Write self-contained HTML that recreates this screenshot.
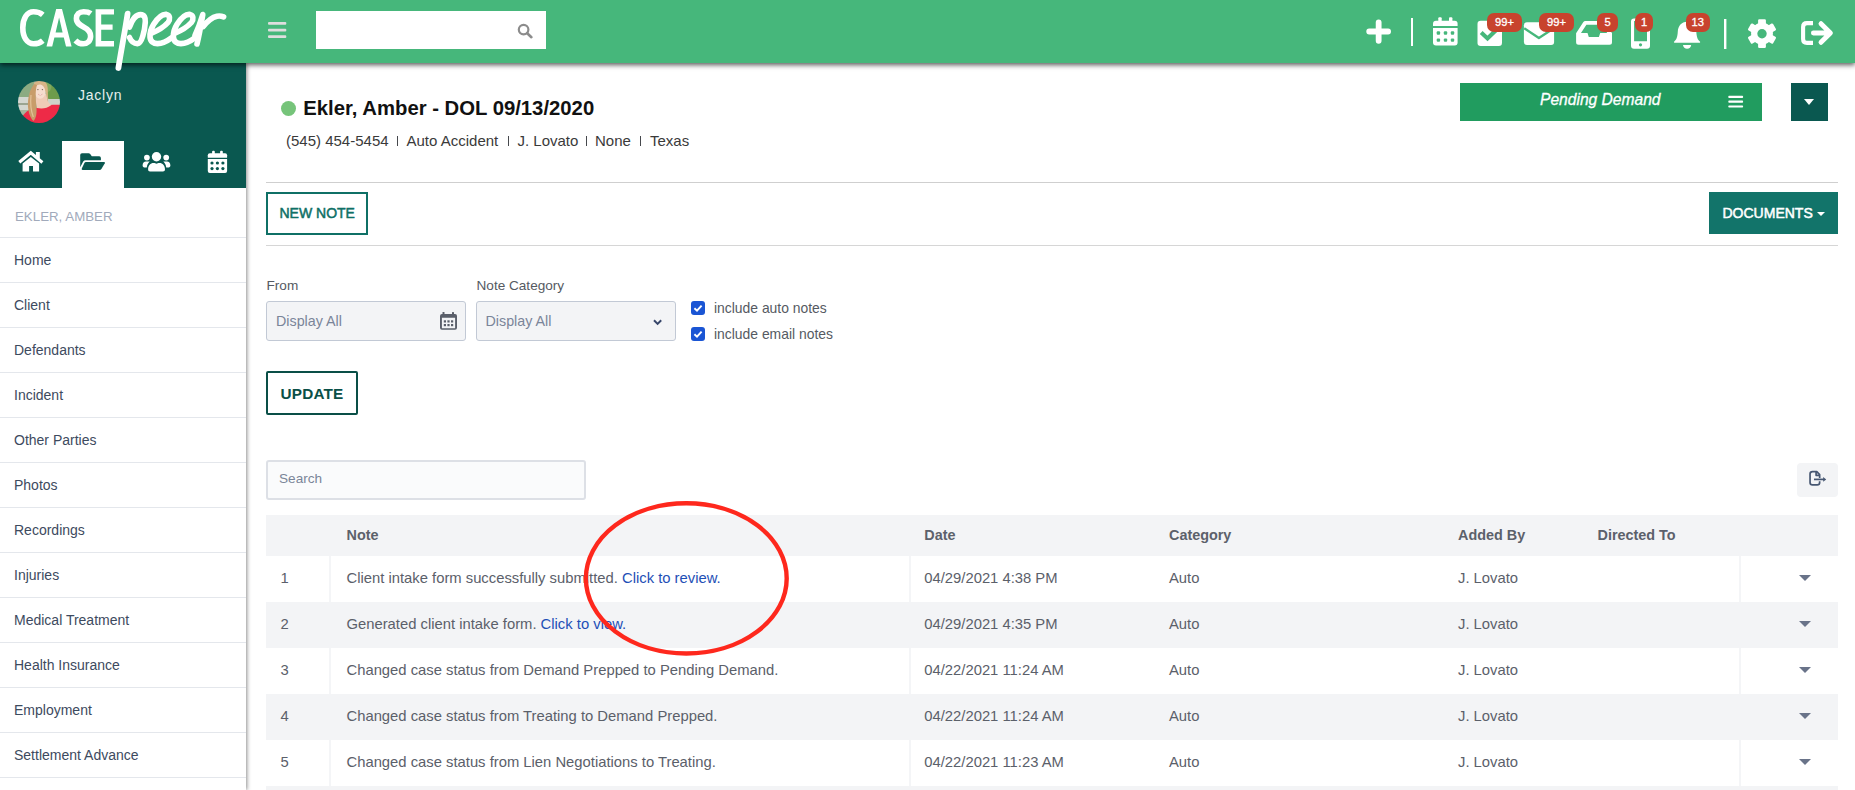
<!DOCTYPE html>
<html><head><meta charset="utf-8">
<style>
*{box-sizing:border-box;margin:0;padding:0}
html,body{width:1855px;height:790px;overflow:hidden;background:#fff;font-family:"Liberation Sans",sans-serif;position:relative}
.abs{position:absolute}
.t{position:absolute;white-space:nowrap;line-height:1}
#hdr{left:0;top:0;width:1855px;height:63px;background:#46b77b;z-index:5;box-shadow:0 2px 5px rgba(0,0,0,.65)}
#side{left:0;top:63px;width:246px;height:727px;background:#fff;z-index:4;box-shadow:1px 0 4px rgba(0,0,0,.45)}
.badge{position:absolute;top:13px;height:19px;border-radius:7px;background:#c8432d;color:#fff;font-size:11.2px;line-height:19px;text-align:center;-webkit-text-stroke:0.3px #fff}
.snav{position:absolute;left:0;width:246px;height:45px;border-top:1px solid #e4e7ec;color:#3d4a5e;font-size:14px}
.snav span{position:absolute;left:14px;top:15px;line-height:1}
</style></head>
<body>
<!-- HEADER -->
<div id="hdr" class="abs">
<svg class="abs" style="left:0;top:0;overflow:visible" width="1855" height="63" viewBox="0 0 1855 63">
  <!-- CASE -->
  <g fill="none" stroke="#fff" stroke-width="5.6">
    <path d="M42.8 14.8 C40 12.4 37 11.7 33.6 11.7 C27 11.7 22.8 18.5 22.8 27.75 C22.8 37.2 27 43.8 33.6 43.8 C37 43.8 40 43 42.8 40.6"/>
    <path d="M90.8 13.6 C88.6 12 86.2 11.7 83.6 11.7 C79.2 11.7 76.4 14.5 76.4 18.6 C76.4 23.2 80 25.2 84 27.2 C88.4 29.4 90.6 31.6 90.6 36.2 C90.6 41 87.4 43.8 83.2 43.8 C80.2 43.8 77.6 42.6 75.4 40.4"/>
  </g>
  <path fill="#fff" fill-rule="evenodd" d="M46.5 46.6 L56.2 9 L62 9 L71.6 46.6 L66 46.6 L63.8 37.6 L54.4 37.6 L52.2 46.6 Z M55.6 32.6 L62.6 32.6 L59.1 17.5 Z"/>
  <path fill="#fff" d="M95.6 9.3 L114 9.3 L114 14.6 L101.2 14.6 L101.2 24.6 L112.6 24.6 L112.6 29.8 L101.2 29.8 L101.2 41 L114 41 L114 46.4 L95.6 46.4 Z"/>
  <!-- peer -->
  <g fill="none" stroke="#fff" stroke-width="5.6" stroke-linecap="round" stroke-linejoin="round">
    <path d="M127.6 13.6 C125.2 30 121.2 50 118.4 68" stroke-width="5.8"/>
    <path d="M129.5 27 C132 20 136 14.6 140.5 14.6 C144.5 14.6 145.6 18 145.3 22 C144.8 30 142 43.5 137.5 43.6 C134 43.7 131 41 129.5 37.5"/>
    <path d="M151 33.5 C157 31 164 27 168 22.5 C170.5 19.5 170 15 166.5 14.4 C162 13.8 157 19 153.5 24.5 C151 28.5 149.8 33 150 37 C150.3 41.5 153.5 43.6 157.5 43.6 C163 43.6 168 40.5 172 37.5"/>
    <path d="M 174.4 33.5 C 180.4 31.0 187.4 27.0 191.4 22.5 C 193.9 19.5 193.4 15.0 189.9 14.4 C 185.4 13.8 180.4 19.0 176.9 24.5 C 174.4 28.5 173.2 33.0 173.4 37.0 C 173.7 41.5 176.9 43.6 180.9 43.6 C 186.4 43.6 191.4 40.5 195.4 37.5"/>
    <path d="M195 35.5 C197.5 30 200.5 22 202.8 14.5 C201 25 199 36 197 44"/>
    <path d="M203.2 26.5 C207.5 21 212.5 17.2 217 16.2 C219.5 15.7 221.5 16 223.6 16.9"/>
  </g>
  <!-- hamburger -->
  <g fill="#dedede"><rect x="268" y="22" width="18.3" height="2.8" rx="1"/><rect x="268" y="28.7" width="18.3" height="2.8" rx="1"/><rect x="268" y="35.2" width="18.3" height="2.8" rx="1"/></g>
  <!-- search -->
  <rect x="316" y="11" width="230" height="38" fill="#fff"/>
  <circle cx="523.6" cy="29.6" r="4.8" fill="none" stroke="#8c8c8c" stroke-width="2.2"/>
  <path d="M527.2 33.2 L531.4 37.2" stroke="#8c8c8c" stroke-width="2.6" stroke-linecap="round"/>
  <!-- plus -->
  <path d="M1369.2 31.5 H1388.1 M1378.65 22.3 V40.8" stroke="#fff" stroke-width="5.8" stroke-linecap="round"/>
  <rect x="1411" y="18" width="2" height="28" fill="#fff"/>
  <!-- calendar -->
  <g fill="#fff">
    <rect x="1438.3" y="17.3" width="3.4" height="6" rx="1"/><rect x="1449" y="17.3" width="3.4" height="6" rx="1"/>
    <path d="M1433 23.8 Q1433 20.8 1436 20.8 L1454.6 20.8 Q1457.6 20.8 1457.6 23.8 L1457.6 26.1 L1433 26.1 Z"/>
    <path d="M1433 28.1 L1457.6 28.1 L1457.6 42.4 Q1457.6 45.4 1454.6 45.4 L1436 45.4 Q1433 45.4 1433 42.4 Z"/>
  </g>
  <g fill="#46b77b"><rect x="1436.7" y="31.3" width="3.4" height="3.4" rx="1"/><rect x="1443.8" y="31.3" width="3.4" height="3.4" rx="1"/><rect x="1450.8" y="31.3" width="3.4" height="3.4" rx="1"/><rect x="1436.7" y="38.4" width="3.4" height="3.4" rx="1"/><rect x="1443.8" y="38.4" width="3.4" height="3.4" rx="1"/><rect x="1450.8" y="38.4" width="3.4" height="3.4" rx="1"/></g>
  <!-- check square -->
  <rect x="1477.5" y="20.8" width="24.5" height="25.1" rx="3.2" fill="#fff"/>
  <path d="M1481.2 32.6 L1487.5 38.5 L1497 29.2" fill="none" stroke="#46b77b" stroke-width="4.1"/>
  <!-- envelope -->
  <rect x="1523.9" y="22.2" width="30.2" height="22.8" rx="3" fill="#fff"/>
  <path d="M1524.2 28.2 L1538.9 38 L1553.8 28.2" fill="none" stroke="#46b77b" stroke-width="2.3" stroke-linejoin="round"/>
  <!-- inbox -->
  <path fill="#fff" fill-rule="evenodd" d="M1576.1 33.2 L1583.2 22.2 Q1584 20.9 1585.5 20.9 L1603 20.9 Q1604.5 20.9 1605.3 22.2 L1612 33.2 L1612 42.2 Q1612 44.7 1609.5 44.7 L1578.6 44.7 Q1576.1 44.7 1576.1 42.2 Z M1581 32.9 L1586.4 24.8 L1602 24.8 L1607.2 32.9 L1600.2 32.9 L1598.9 36.9 L1588.8 36.9 L1587.5 32.9 Z"/>
  <!-- phone -->
  <path fill="#fff" fill-rule="evenodd" d="M1634 18.6 L1647 18.6 Q1650 18.6 1650 21.6 L1650 45.8 Q1650 48.8 1647 48.8 L1634 48.8 Q1631 48.8 1631 45.8 L1631 21.6 Q1631 18.6 1634 18.6 Z M1634.1 21 L1634.1 41.2 L1647 41.2 L1647 21 Z"/>
  <circle cx="1640.5" cy="44.8" r="1.6" fill="#46b77b"/>
  <!-- bell -->
  <path fill="#fff" d="M1687 21.7 C1692.5 21.7 1696 26 1696.3 31.5 C1696.6 37 1697.6 39.6 1699.6 41.2 C1700.6 42 1700.4 42.8 1699 42.8 L1675.2 42.8 C1673.8 42.8 1673.5 42 1674.5 41.2 C1676.5 39.6 1677.5 37 1677.8 31.5 C1678.1 26 1681.5 21.7 1687 21.7 Z"/>
  <path fill="#fff" d="M1683 45 L1691.2 45 C1691 47.4 1689.3 48.8 1687.1 48.8 C1684.9 48.8 1683.2 47.4 1683 45 Z"/>
  <rect x="1724" y="19" width="2.4" height="30" fill="#fff"/>
  <!-- gear -->
  <g fill="#fff"><circle cx="1762.0" cy="33.6" r="10.9"/><rect x="1758.10" y="19.20" width="7.8" height="8" rx="1.2" transform="rotate(0 1762.0 33.6)"/><rect x="1758.10" y="19.20" width="7.8" height="8" rx="1.2" transform="rotate(60 1762.0 33.6)"/><rect x="1758.10" y="19.20" width="7.8" height="8" rx="1.2" transform="rotate(120 1762.0 33.6)"/><rect x="1758.10" y="19.20" width="7.8" height="8" rx="1.2" transform="rotate(180 1762.0 33.6)"/><rect x="1758.10" y="19.20" width="7.8" height="8" rx="1.2" transform="rotate(240 1762.0 33.6)"/><rect x="1758.10" y="19.20" width="7.8" height="8" rx="1.2" transform="rotate(300 1762.0 33.6)"/></g><circle cx="1762.0" cy="33.8" r="4.7" fill="#46b77b"/>
  <!-- sign out -->
  <path d="M1813 23.1 L1807 23.1 Q1803.1 23.1 1803.1 27 L1803.1 39 Q1803.1 42.9 1807 42.9 L1813 42.9" fill="none" stroke="#fff" stroke-width="4.1"/>
  <path d="M1813.4 33 L1830 33 M1821 23.7 L1830.4 33 L1821 42.3" fill="none" stroke="#fff" stroke-width="4.9" stroke-linecap="round" stroke-linejoin="round"/>
</svg>
<div class="badge" style="left:1487px;width:35px">99+</div>
<div class="badge" style="left:1539px;width:35px">99+</div>
<div class="badge" style="left:1597px;width:21px">5</div>
<div class="badge" style="left:1635px;width:18px">1</div>
<div class="badge" style="left:1685.5px;width:24.5px">13</div>
</div>

<!-- SIDEBAR -->
<div id="side" class="abs">
  <div class="abs" style="left:0;top:0;width:246px;height:125px;background:#0a5850"></div>
  <div class="abs" style="left:62px;top:78px;width:62px;height:47px;background:#fff"></div>
  <svg class="abs" style="left:0;top:0" width="246" height="125" viewBox="0 63 246 125">
    <defs><clipPath id="av"><circle cx="39" cy="102" r="21"/></clipPath><filter id="avb" x="-10%" y="-10%" width="120%" height="120%"><feGaussianBlur stdDeviation="0.45"/></filter></defs>
    <g clip-path="url(#av)"><g filter="url(#avb)">
      <rect x="17" y="80" width="44" height="44" fill="#a6b69c"/>
      <rect x="17" y="80" width="17" height="17" fill="#8cab82"/>
      <ellipse cx="54.5" cy="90" rx="9" ry="11.5" fill="#6e9c4b"/>
      <ellipse cx="47.5" cy="86" rx="4" ry="6" fill="#82aa5e"/>
      <rect x="17" y="97" width="14" height="13" fill="#d4d7d1"/>
      <rect x="17" y="103" width="14" height="2" fill="#9ba592"/>
      <rect x="48" y="99" width="13" height="7" fill="#cdd3ca"/>
      <path d="M20 124 C22 114 27 110 33 109 L38 107.5 C42 108.5 46 107.5 50 105 C54 104.5 58 104.5 61 105 L61 124 Z" fill="#ee2b46"/>
      <path d="M35.5 94 L46.5 94 C46.8 100 48.5 103.5 51.5 105 C47 108.5 42 109 37 108 C36 104 35.7 99 35.5 94 Z" fill="#efcbb7"/>
      <ellipse cx="40.2" cy="91" rx="5.6" ry="7.8" fill="#f6ddcf"/>
      <path d="M33.5 88 C33 81.5 37 80.5 40.5 80.5 C45 80.5 47.5 83 47.8 89 L48 102 C46 94 45.5 85.5 40.5 84.5 C36.5 84 34.8 87.5 34.5 92 Z" fill="#d8b487"/>
      <path d="M34.5 84 C29.5 89 27.5 99 28 107 C28.5 113 30.5 118.5 33.5 121 C36.5 118 37 112 36.3 106 C35.5 98 35.3 90 37 85 Z" fill="#c89c6b"/>
      <path d="M31 95 C30.2 103 31 111 33.3 117" fill="none" stroke="#e2c197" stroke-width="1.2"/>
      <circle cx="37.9" cy="89.6" r="0.7" fill="#7d6656"/><circle cx="42.4" cy="89.6" r="0.7" fill="#7d6656"/>
      <path d="M38 94.2 Q40.2 96.2 42.4 94.2" fill="#fff" stroke="#d98f86" stroke-width="0.6"/>
    </g></g>
    <!-- home -->
    <path d="M19.3 162.3 L30.8 152.8 L42.4 162.5" fill="none" stroke="#fff" stroke-width="3.1" stroke-linejoin="miter"/>
    <rect x="35.9" y="152" width="3.9" height="6.5" fill="#fff"/>
    <path d="M22.6 163.6 L30.8 157.1 L39.1 163.6 L39.1 171.4 L33 171.4 L33 165.9 L29.1 165.9 L29.1 171.4 L22.6 171.4 Z" fill="#fff"/>
    <!-- folder open -->
    <path d="M80.2 155 Q80.2 153.3 82 153.3 L88.6 153.3 Q89.6 153.3 90.2 154 L91.8 156.2 L99.2 156.2 Q100.9 156.2 100.9 158 L100.9 160.3 L85.5 160.3 Q84 160.3 83.2 161.6 L80.2 167.2 Z" fill="#0a5850"/>
    <path d="M85.8 162 L104 162 Q105.4 162 104.8 163.3 L101.4 169 Q100.8 169.9 99.6 169.9 L82.6 169.9 Q81.2 169.9 81.8 168.6 L84.4 163 Q85 162 85.8 162 Z" fill="#0a5850"/>
    <!-- users -->
    <g fill="#fff">
      <circle cx="156.5" cy="156.8" r="4.7"/><circle cx="146.9" cy="157.6" r="2.85"/><circle cx="166.2" cy="157.6" r="2.85"/>
      <path d="M148.1 169.6 C148.1 165.5 150.5 163.1 153.5 163.1 C155 163.1 155.6 163.8 156.5 163.8 C157.4 163.8 158 163.1 159.5 163.1 C162.6 163.1 165 165.5 165 169.6 C165 170.8 164.2 171.5 163 171.5 L150 171.5 C148.8 171.5 148.1 170.8 148.1 169.6 Z"/>
      <path d="M142.6 165.6 C142.6 163.2 144 161.6 146 161.6 L149.8 161.6 C149.4 162 147 164 146.8 167.4 L144.3 167.4 C143.3 167.4 142.6 166.7 142.6 165.6 Z"/>
      <path d="M170.4 165.6 C170.4 163.2 169 161.6 167 161.6 L163.2 161.6 C163.6 162 166 164 166.2 167.4 L168.7 167.4 C169.7 167.4 170.4 166.7 170.4 165.6 Z"/>
    </g>
    <!-- calendar -->
    <g fill="#fff">
      <rect x="212.1" y="150.7" width="2.7" height="4" rx="1"/><rect x="220.1" y="150.7" width="2.7" height="4" rx="1"/>
      <path d="M207.8 155.2 Q207.8 153.2 209.8 153.2 L225.1 153.2 Q227.1 153.2 227.1 155.2 L227.1 157.7 L207.8 157.7 Z"/>
      <path d="M207.8 159.1 L227.1 159.1 L227.1 170.9 Q227.1 172.9 225.1 172.9 L209.8 172.9 Q207.8 172.9 207.8 170.9 Z"/>
    </g>
    <g fill="#0a5850"><circle cx="212" cy="163" r="1.6"/><circle cx="217.4" cy="163" r="1.6"/><circle cx="222.9" cy="163" r="1.6"/><circle cx="212" cy="168.6" r="1.6"/><circle cx="217.4" cy="168.6" r="1.6"/><circle cx="222.9" cy="168.6" r="1.6"/></g>
  </svg>
  <div class="t" style="left:78px;top:25px;font-size:14px;letter-spacing:0.76px;color:#e6efed">Jaclyn</div>
  <div class="t" style="left:15px;top:147px;font-size:13.3px;color:#a1aabb">EKLER, AMBER</div>
  <div class="snav" style="top:174px"><span>Home</span></div>
  <div class="snav" style="top:219px"><span>Client</span></div>
  <div class="snav" style="top:264px"><span>Defendants</span></div>
  <div class="snav" style="top:309px"><span>Incident</span></div>
  <div class="snav" style="top:354px"><span>Other Parties</span></div>
  <div class="snav" style="top:399px"><span>Photos</span></div>
  <div class="snav" style="top:444px"><span>Recordings</span></div>
  <div class="snav" style="top:489px"><span>Injuries</span></div>
  <div class="snav" style="top:534px"><span>Medical Treatment</span></div>
  <div class="snav" style="top:579px"><span>Health Insurance</span></div>
  <div class="snav" style="top:624px"><span>Employment</span></div>
  <div class="snav" style="top:669px"><span>Settlement Advance</span></div>
  <div class="snav" style="top:714px"><span></span></div>
</div>

<!-- MAIN -->
<!--MAIN-START-->
<style>
.sub{font-size:15px;color:#3a3a3a;top:132.5px}
.pipe{position:absolute;top:135.6px;width:1px;height:10.6px;background:#46484d}
.lbl{font-size:13.6px;color:#555a62}
.inp{position:absolute;background:#f3f4f6;border:1px solid #c2c9d5;border-radius:3px;height:40px;width:200px;top:301px}
.inp span{position:absolute;top:12.2px;line-height:1;font-size:14.3px;color:#7a8599;white-space:nowrap}
.cb{position:absolute;left:691px;width:14px;height:14px;border-radius:3px;background:#1a55d4}
.cbt{font-size:13.9px;color:#555a62}
.row{position:absolute;left:266px;width:1572px;height:46px;font-size:14.8px;color:#5b606a;line-height:46px;white-space:nowrap}
.row.w{background:#fff}
.row.g{background:#f3f4f6}
.row span{position:absolute;top:-1px}
.row .vd{position:absolute;top:0;width:2px;height:46px;background:#f4f5f7}
.th{position:absolute;font-weight:bold;font-size:14.4px;color:#5c616b;line-height:1;white-space:nowrap}
.row a{color:#1e4fb6;text-decoration:none}
.caret{position:absolute;left:1533px;top:19px;width:0;height:0;border-left:6px solid transparent;border-right:6px solid transparent;border-top:6.5px solid #697389}
</style>
<div class="abs" style="left:281px;top:101px;width:15px;height:15px;border-radius:50%;background:#76c47a"></div>
<div class="t" style="left:303.3px;top:98.4px;font-size:20.3px;font-weight:bold;color:#111">Ekler, Amber - DOL 09/13/2020</div>
<div class="t sub" style="left:286px">(545) 454-5454</div>
<div class="pipe" style="left:397px"></div>
<div class="t sub" style="left:406.5px">Auto Accident</div>
<div class="pipe" style="left:508px"></div>
<div class="t sub" style="left:517.5px">J. Lovato</div>
<div class="pipe" style="left:586px"></div>
<div class="t sub" style="left:595px">None</div>
<div class="pipe" style="left:640px"></div>
<div class="t sub" style="left:650px">Texas</div>

<!-- status -->
<div class="abs" style="left:1460px;top:83px;width:302px;height:38px;background:#219c5f"></div>
<div class="t" style="left:1540px;top:92.2px;font-size:15.6px;font-style:italic;color:#fff;-webkit-text-stroke:0.3px #fff">Pending Demand</div>
<svg class="abs" style="left:1728px;top:95px" width="16" height="14"><g fill="#fff"><rect x="0.3" y="0.8" width="14.8" height="2.2" rx="0.8"/><rect x="0.3" y="5.6" width="14.8" height="2.2" rx="0.8"/><rect x="0.3" y="10.4" width="14.8" height="2.2" rx="0.8"/></g></svg>
<div class="abs" style="left:1791px;top:83px;width:37px;height:38px;background:#0a5850"></div>
<div class="abs" style="left:1804px;top:98.5px;width:0;height:0;border-left:5px solid transparent;border-right:5px solid transparent;border-top:6px solid #fff"></div>

<div class="abs" style="left:266px;top:182px;width:1572px;height:1px;background:#cfcfcf"></div>
<div class="abs" style="left:266px;top:245px;width:1572px;height:1px;background:#d6d6d6"></div>

<!-- NEW NOTE -->
<div class="abs" style="left:266px;top:192px;width:102px;height:43px;border:2px solid #0f7066"></div>
<div class="t" style="left:279.5px;top:205.5px;font-size:14px;color:#0f7066;-webkit-text-stroke:0.5px #0f7066">NEW NOTE</div>
<!-- DOCUMENTS -->
<div class="abs" style="left:1709px;top:192px;width:129px;height:42px;background:#12746a"></div>
<div class="t" style="left:1722.5px;top:205.6px;font-size:14px;color:#fff;-webkit-text-stroke:0.5px #fff">DOCUMENTS</div>
<div class="abs" style="left:1817px;top:211.5px;width:0;height:0;border-left:4px solid transparent;border-right:4px solid transparent;border-top:4.5px solid #fff"></div>

<!-- filters -->
<div class="t lbl" style="left:266.5px;top:278.8px">From</div>
<div class="t lbl" style="left:476.5px;top:278.5px">Note Category</div>
<div class="inp" style="left:266px"><span style="left:9px">Display All</span>
<svg class="abs" style="left:172px;top:9px" width="20" height="20" viewBox="0 0 20 20"><g fill="#5a5f6a"><rect x="3.5" y="1" width="2" height="3" rx="0.5"/><rect x="13" y="1" width="2" height="3" rx="0.5"/><path d="M1 4.9 Q1 2.9 3 2.9 L16 2.9 Q18 2.9 18 4.9 L18 16.7 Q18 18.7 16 18.7 L3 18.7 Q1 18.7 1 16.7 Z M2.9 6.8 L2.9 17.2 L16.1 17.2 L16.1 6.8 Z" fill-rule="evenodd"/><rect x="4.8" y="9.3" width="2.2" height="2.2"/><rect x="8.4" y="9.3" width="2.2" height="2.2"/><rect x="12" y="9.3" width="2.2" height="2.2"/><rect x="4.8" y="13" width="2.2" height="2.2"/><rect x="8.4" y="13" width="2.2" height="2.2"/><rect x="12" y="13" width="2.2" height="2.2"/></g></svg>
</div>
<div class="inp" style="left:476px"><span style="left:8.5px">Display All</span>
<svg class="abs" style="left:175px;top:15.5px" width="12" height="9" viewBox="0 0 12 9"><path d="M2 2.3 L5.6 5.9 L9.2 2.3" fill="none" stroke="#37466a" stroke-width="2"/></svg>
</div>
<div class="cb" style="top:301px"><svg width="14" height="14"><path d="M3.4 7.2 L6 9.6 L10.6 4.6" fill="none" stroke="#fff" stroke-width="1.9"/></svg></div>
<div class="cb" style="top:327px"><svg width="14" height="14"><path d="M3.4 7.2 L6 9.6 L10.6 4.6" fill="none" stroke="#fff" stroke-width="1.9"/></svg></div>
<div class="t cbt" style="left:714px;top:302px">include auto notes</div>
<div class="t cbt" style="left:714px;top:328px">include email notes</div>

<!-- UPDATE -->
<div class="abs" style="left:266px;top:371px;width:92px;height:44px;border:2px solid #0a4f47;border-radius:2px"></div>
<div class="t" style="left:280.5px;top:385.6px;font-size:15.3px;font-weight:bold;color:#0a4f47;letter-spacing:0.2px">UPDATE</div>

<!-- search -->
<div class="abs" style="left:266px;top:460px;width:320px;height:40px;background:#fafbfc;border:2px solid #dde0e6;border-radius:3px"></div>
<div class="t" style="left:279px;top:472px;font-size:13.6px;color:#7b8699">Search</div>
<!-- export -->
<div class="abs" style="left:1797px;top:463px;width:41px;height:34px;background:#f3f4f6;border-radius:4px"></div>
<svg class="abs" style="left:1806px;top:467px" width="24" height="22" viewBox="0 0 24 22"><g fill="none" stroke="#475772" stroke-width="1.7" stroke-linejoin="round"><path d="M13.65 11 L13.65 7.6 L10.8 4.65 L6.5 4.65 Q4.05 4.65 4.05 7.1 L4.05 15.5 Q4.05 17.95 6.5 17.95 L11.2 17.95 Q13.65 17.95 13.65 15.5 L13.65 14.2"/><path d="M10.1 4.65 L10.1 8.3 L13.65 8.3"/><path d="M8 12.4 L18 12.4"/></g><path d="M17.2 10 L20.2 12.4 L17.2 14.8 Z" fill="#475772"/></svg>

<!-- table -->
<div class="abs" style="left:266px;top:515px;width:1572px;height:41px;background:#f3f4f6"></div>
<div class="th" style="left:346.5px;top:527.5px">Note</div>
<div class="th" style="left:924.3px;top:527.5px">Date</div>
<div class="th" style="left:1169px;top:527.5px">Category</div>
<div class="th" style="left:1458px;top:527.5px">Added By</div>
<div class="th" style="left:1597.5px;top:527.5px">Directed To</div>

<div class="row w" style="top:556px"><div class="vd" style="left:63px"></div><div class="vd" style="left:643px"></div><div class="vd" style="left:1472.5px"></div><span style="left:14.5px">1</span><span style="left:80.5px">Client intake form successfully submitted. <a>Click to review.</a></span><span style="left:658.3px">04/29/2021 4:38 PM</span><span style="left:903px">Auto</span><span style="left:1192px">J. Lovato</span><div class="caret"></div></div>
<div class="row g" style="top:602px"><span style="left:14.5px">2</span><span style="left:80.5px">Generated client intake form. <a>Click to view.</a></span><span style="left:658.3px">04/29/2021 4:35 PM</span><span style="left:903px">Auto</span><span style="left:1192px">J. Lovato</span><div class="caret"></div></div>
<div class="row w" style="top:648px"><div class="vd" style="left:63px"></div><div class="vd" style="left:643px"></div><div class="vd" style="left:1472.5px"></div><span style="left:14.5px">3</span><span style="left:80.5px">Changed case status from Demand Prepped to Pending Demand.</span><span style="left:658.3px">04/22/2021 11:24 AM</span><span style="left:903px">Auto</span><span style="left:1192px">J. Lovato</span><div class="caret"></div></div>
<div class="row g" style="top:694px"><span style="left:14.5px">4</span><span style="left:80.5px">Changed case status from Treating to Demand Prepped.</span><span style="left:658.3px">04/22/2021 11:24 AM</span><span style="left:903px">Auto</span><span style="left:1192px">J. Lovato</span><div class="caret"></div></div>
<div class="row w" style="top:740px"><div class="vd" style="left:63px"></div><div class="vd" style="left:643px"></div><div class="vd" style="left:1472.5px"></div><span style="left:14.5px">5</span><span style="left:80.5px">Changed case status from Lien Negotiations to Treating.</span><span style="left:658.3px">04/22/2021 11:23 AM</span><span style="left:903px">Auto</span><span style="left:1192px">J. Lovato</span><div class="caret"></div></div>
<div class="row g" style="top:786px"></div>

<!-- annotation -->
<svg class="abs" style="left:0;top:0;z-index:10;pointer-events:none" width="1855" height="790"><ellipse cx="686.3" cy="578.4" rx="100.4" ry="75.1" fill="none" stroke="#fe281d" stroke-width="4.4"/></svg>

<!--MAIN-END-->
</body></html>
